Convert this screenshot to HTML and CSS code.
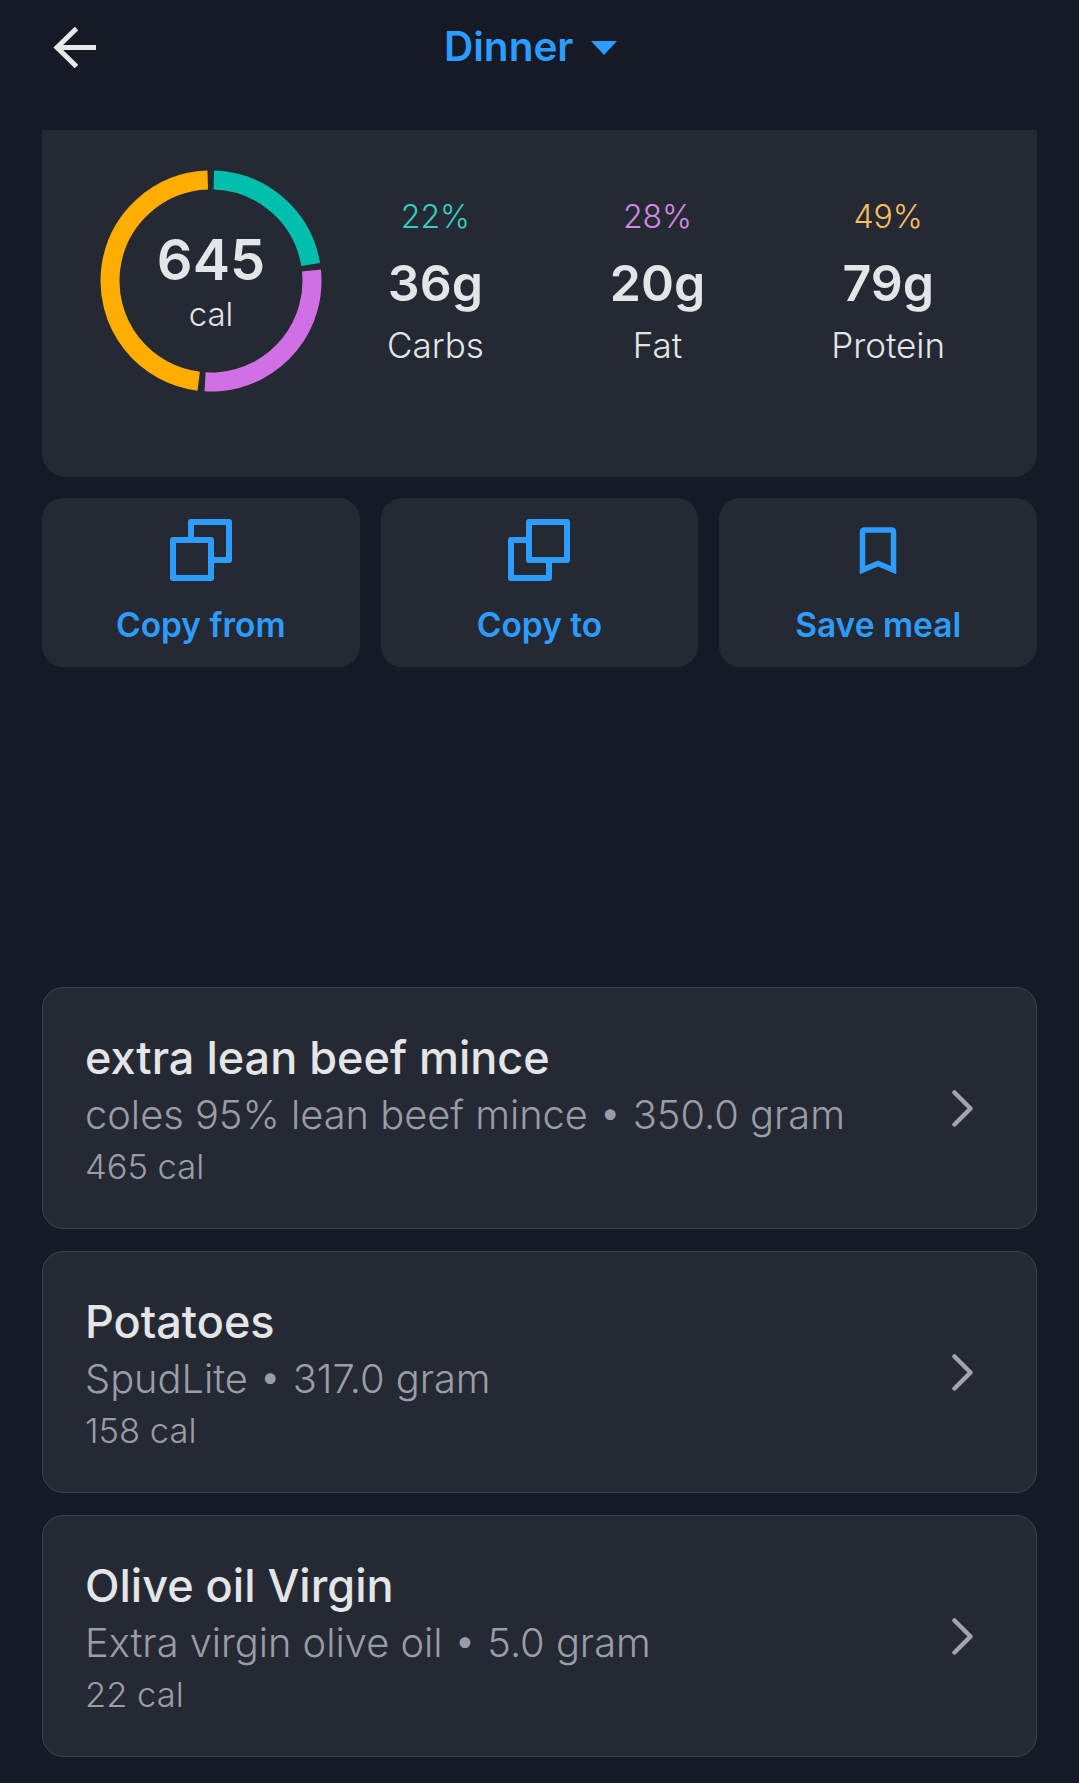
FILE: index.html
```html
<!DOCTYPE html>
<html lang="en">
<head>
    <meta charset="UTF-8">
    <title>Dinner</title>
    <link rel="stylesheet" href="styles.css">
</head>
<body>

    <header class="top-bar">
        <svg class="back-icon" viewBox="0 0 44 41" fill="none" stroke="currentColor" stroke-width="5">
            <path d="M43 20.500H4"/>
            <path d="M23.500 1.500L4 20.500L23.500 39.500"/>
        </svg>
        <div class="meal-title">
            <span>Dinner</span>
            <i class="caret"></i>
        </div>
    </header>

    <section class="summary">
        <div class="ring">
            <svg viewBox="0 0 222 222" fill="none" stroke-width="19">
                <circle class="arc-carbs" cx="111" cy="111" r="101" pathLength="360" stroke-dasharray="79 281" transform="rotate(-88.4 111 111)"/>
                <circle class="arc-fat" cx="111" cy="111" r="101" pathLength="360" stroke-dasharray="99.4 260.6" transform="rotate(-6 111 111)"/>
                <circle class="arc-protein" cx="111" cy="111" r="101" pathLength="360" stroke-dasharray="171.1 188.9" transform="rotate(97 111 111)"/>
            </svg>
            <div class="ring-text">
                <strong>645</strong>
                <span>cal</span>
            </div>
        </div>
        <div class="macros">
            <div class="macro">
                <span class="percent carbs">22%</span>
                <strong>36g</strong>
                <span class="macro-name">Carbs</span>
            </div>
            <div class="macro">
                <span class="percent fat">28%</span>
                <strong>20g</strong>
                <span class="macro-name">Fat</span>
            </div>
            <div class="macro">
                <span class="percent protein">49%</span>
                <strong>79g</strong>
                <span class="macro-name">Protein</span>
            </div>
        </div>
    </section>

    <div class="actions">
        <button class="action">
            <svg class="action-icon" viewBox="0 0 62 62" fill="none" stroke="currentColor" stroke-width="6" stroke-linejoin="round">
                <rect x="21" y="3" width="38" height="38"/>
                <rect x="3" y="21" width="38" height="38" fill="#252934"/>
            </svg>
            Copy from
        </button>
        <button class="action">
            <svg class="action-icon" viewBox="0 0 62 62" fill="none" stroke="currentColor" stroke-width="6" stroke-linejoin="round">
                <rect x="3" y="21" width="38" height="38"/>
                <rect x="21" y="3" width="38" height="38" fill="#252934"/>
            </svg>
            Copy to
        </button>
        <button class="action">
            <svg class="action-icon" viewBox="0 0 62 62" fill="none" stroke="currentColor" stroke-width="5.500">
                <path d="M15.500 51V13Q15.500 11 17.500 11H44.500Q46.500 11 46.500 13V51L31 44.500Z"/>
            </svg>
            Save meal
        </button>
    </div>

    <div class="food-list">
        <div class="food">
            <div class="food-text">
                <div class="food-name">extra lean beef mince</div>
                <div class="food-detail">coles 95% lean beef mince • 350.0 gram</div>
                <div class="food-cal">465 cal</div>
            </div>
            <svg class="chevron" viewBox="0 0 21 37" fill="none" stroke="currentColor" stroke-width="4.500" stroke-linecap="round" stroke-linejoin="round"><path d="M2.500 2.500L18.500 18.500L2.500 34.500"/></svg>
        </div>
        <div class="food">
            <div class="food-text">
                <div class="food-name">Potatoes</div>
                <div class="food-detail">SpudLite • 317.0 gram</div>
                <div class="food-cal">158 cal</div>
            </div>
            <svg class="chevron" viewBox="0 0 21 37" fill="none" stroke="currentColor" stroke-width="4.500" stroke-linecap="round" stroke-linejoin="round"><path d="M2.500 2.500L18.500 18.500L2.500 34.500"/></svg>
        </div>
        <div class="food">
            <div class="food-text">
                <div class="food-name">Olive oil Virgin</div>
                <div class="food-detail">Extra virgin olive oil • 5.0 gram</div>
                <div class="food-cal">22 cal</div>
            </div>
            <svg class="chevron" viewBox="0 0 21 37" fill="none" stroke="currentColor" stroke-width="4.500" stroke-linecap="round" stroke-linejoin="round"><path d="M2.500 2.500L18.500 18.500L2.500 34.500"/></svg>
        </div>
    </div>

</body>
</html>
```

FILE: styles.css
```css
*{
    margin: 0;
    padding: 0;
    box-sizing: border-box;
}

body{
    height: 1783px;
    overflow: hidden;
    background-color: #151a26;
    color: #e4e5e7;
    font-family: "Inter", sans-serif;
}

.top-bar{
    height: 130px;
    padding: 27px 0 0 53px;
    display: flex;
    align-items: flex-start;
}

.back-icon{
    width: 44px;
    height: 41px;
    color: #e8e8e8;
}

.meal-title{
    margin-left: 347px;
    height: 41px;
    display: flex;
    align-items: center;
    gap: 18px;
    color: #2d9cff;
    font-size: 40.500px;
    font-weight: 600;
}

.meal-title span{
    margin-top: -2px;
}

.caret{
    width: 0;
    height: 0;
    border-left: 13px solid transparent;
    border-right: 13px solid transparent;
    border-top: 14px solid #2d9cff;
}

.summary{
    margin: 0 42px;
    height: 347px;
    padding: 40px 0 0 58px;
    display: flex;
    align-items: flex-start;
    background-color: #252934;
    border-radius: 0 0 24px 24px;
}

.ring{
    position: relative;
    width: 222px;
    height: 222px;
    flex-shrink: 0;
}

.ring svg{
    display: block;
    width: 222px;
    height: 222px;
}

.arc-carbs{
    stroke: #00bfad;
}

.arc-fat{
    stroke: #d070e4;
}

.arc-protein{
    stroke: #ffae00;
}

.ring-text{
    position: absolute;
    inset: 0;
    display: flex;
    flex-direction: column;
    align-items: center;
    justify-content: center;
}

.ring-text strong{
    font-size: 56px;
    font-weight: 600;
    line-height: 62px;
}

.ring-text span{
    font-size: 33px;
    font-weight: 300;
    line-height: 40px;
    margin-top: 3px;
}

.macros{
    display: flex;
    gap: 126px;
    margin-left: 65px;
    margin-top: 29px;
}

.macro{
    display: flex;
    flex-direction: column;
    align-items: center;
}

.percent{
    font-size: 32px;
    font-weight: 300;
    line-height: 36px;
}

.percent.carbs{
    color: #2fd0c0;
}

.percent.fat{
    color: #d28ae0;
}

.percent.protein{
    color: #ffbe60;
}

.macro strong{
    font-size: 50px;
    font-weight: 600;
    line-height: 62px;
    margin-top: 17px;
}

.macro-name{
    font-size: 35px;
    font-weight: 300;
    line-height: 46px;
    margin-top: 8px;
}

.actions{
    margin: 21px 42px 0;
    display: grid;
    grid-template-columns: repeat(3, 1fr);
    gap: 21px;
}

.action{
    height: 169px;
    padding-top: 21px;
    display: flex;
    flex-direction: column;
    align-items: center;
    border: none;
    background-color: #252934;
    border-radius: 21px;
    color: #2d9cff;
    font-family: inherit;
    font-size: 33.500px;
    font-weight: 600;
    line-height: 40px;
}

.action-icon{
    width: 62px;
    height: 62px;
    margin-bottom: 24px;
}

.food-list{
    margin: 320px 42px 0;
    display: flex;
    flex-direction: column;
    gap: 22px;
}

.food{
    height: 242px;
    padding: 0 63px 0 42px;
    display: flex;
    align-items: center;
    justify-content: space-between;
    background-color: #252934;
    border: 1.5px solid #3d414d;
    border-radius: 21px;
}

.food-text{
    padding-top: 3px;
}

.food-name{
    font-size: 45px;
    font-weight: 500;
    line-height: 56px;
}

.food-detail{
    font-size: 39.800px;
    font-weight: 300;
    line-height: 58px;
    color: #9a9da5;
}

.food-cal{
    font-size: 34.500px;
    font-weight: 300;
    line-height: 46px;
    color: #9a9da5;
}

.chevron{
    width: 21px;
    height: 37px;
    color: #a2a4aa;
}
```
